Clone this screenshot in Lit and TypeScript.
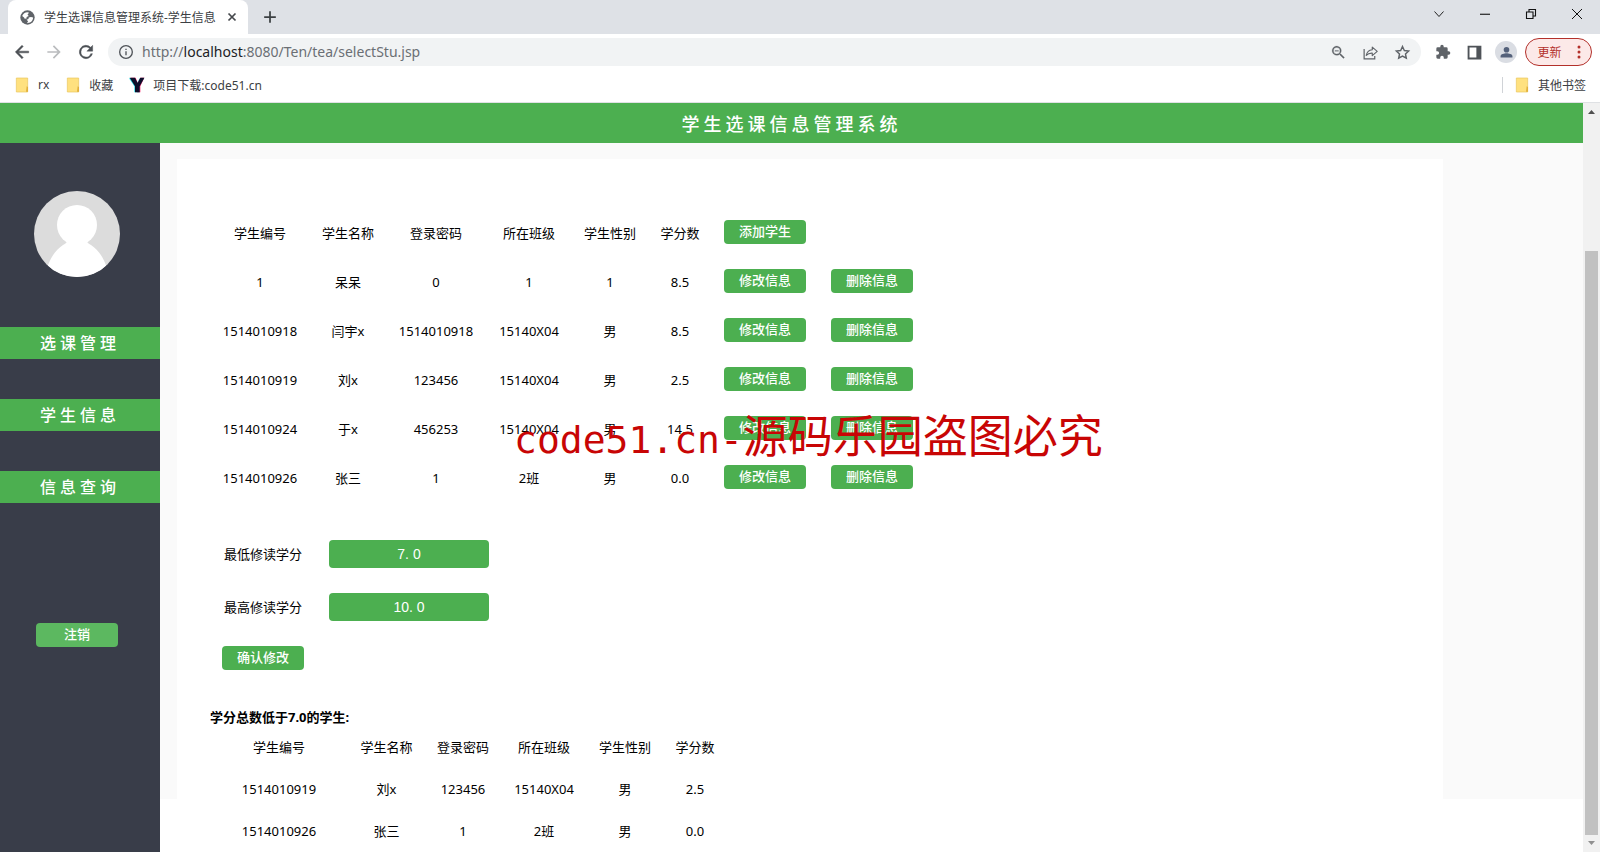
import { LitElement, html, css, svg } from "lit";
import { customElement } from "lit/decorators.js";

type Student = { id: string; name: string; password: string; className: string; gender: string; credit: string };

const HEADINGS = ["学生编号", "学生名称", "登录密码", "所在班级", "学生性别", "学分数"];

const STUDENTS: Student[] = [
  { id: "1", name: "呆呆", password: "0", className: "1", gender: "1", credit: "8.5" },
  { id: "1514010918", name: "闫宇x", password: "1514010918", className: "15140X04", gender: "男", credit: "8.5" },
  { id: "1514010919", name: "刘x", password: "123456", className: "15140X04", gender: "男", credit: "2.5" },
  { id: "1514010924", name: "于x", password: "456253", className: "15140X04", gender: "男", credit: "14.5" },
  { id: "1514010926", name: "张三", password: "1", className: "2班", gender: "男", credit: "0.0" },
];

const cells = (s: Student) =>
  [s.id, s.name, s.password, s.className, s.gender, s.credit].map((v) => html`<td>${v}</td>`);

const icon = (size: number, body: unknown) =>
  html`<svg width=${size} height=${size} viewBox="0 0 24 24" aria-hidden="true">${body}</svg>`;

const ICONS = {
  globe: svg`<circle cx="12" cy="12" r="11.500" fill="#5f6368"/><path d="M3.500 9.500C5 6 8 3.500 12 3.500l2.500 1-2.500 2.500 2 2.500-3.500 1.500v2.500l-3 .5-1-2zM14 12l3.500-1 3.500 1c0 3.500-2 6.500-5 8l-5 1 2-3-2.500-2.500 3-1z" fill="#fff"/>`,
  close: svg`<path d="M5 5l14 14M19 5L5 19" stroke="#45484c" stroke-width="3.4" fill="none"/>`,
  plus: svg`<path d="M12 2v20M2 12h20" stroke="#3c4043" stroke-width="3" fill="none"/>`,
  back: svg`<path d="M20 11H7.8l5.6-5.6L12 4l-8 8 8 8 1.4-1.4L7.8 13H20z" fill="#4c5055" stroke="#4c5055" stroke-width=".6"/>`,
  forward: svg`<path d="M4 11h12.2l-5.6-5.6L12 4l8 8-8 8-1.4-1.4 5.6-5.6H4z" fill="#babcbe"/>`,
  reload: svg`<path d="M17.65 6.35A8 8 0 1 0 19.73 14h-2.08A6 6 0 1 1 12 6c1.66 0 3.14.69 4.22 1.78L13 11h7V4z" fill="#4c5055" stroke="#4c5055" stroke-width=".5"/>`,
  info: svg`<circle cx="12" cy="12" r="9.5" fill="none" stroke="#4f5358" stroke-width="2"/><path d="M11 11h2v6h-2zM11 7h2v2h-2z" fill="#4f5358"/>`,
  zoomOut: svg`<path d="M15.5 14h-.8l-.3-.3A6.5 6.5 0 1 0 13.7 14.4l.3.3v.8l5 5 1.5-1.5zM9.5 14a4.5 4.5 0 1 1 0-9 4.5 4.5 0 0 1 0 9zM7 9h5v1.4H7z" fill="#5f6368" stroke="#5f6368" stroke-width=".3"/>`,
  share: svg`<path d="M3 7v14h15v-4" fill="none" stroke="#5f6368" stroke-width="1.7"/><path d="M14.5 4.5l7 6-7 6v-3.6c-3.500-.2-6.300.8-8.500 3.300.8-4.300 3.500-7.500 8.500-8z" fill="none" stroke="#5f6368" stroke-width="1.6" stroke-linejoin="round"/>`,
  star: svg`<path d="M12 3.600l2.600 5.600 6.100.7-4.500 4.200 1.200 6L12 17.100l-5.400 3 1.200-6-4.500-4.200 6.100-.7z" fill="none" stroke="#5f6368" stroke-width="2"/>`,
  puzzle: svg`<path d="M20.500 11H19V7a2 2 0 0 0-2-2h-4V3.500a2.500 2.500 0 0 0-5 0V5H4a2 2 0 0 0-2 2v3.800h1.500a2.700 2.700 0 0 1 0 5.400H2V20a2 2 0 0 0 2 2h3.800v-1.500a2.700 2.700 0 0 1 5.400 0V22H17a2 2 0 0 0 2-2v-4h1.500a2.500 2.500 0 0 0 0-5z" fill="#5f6368"/>`,
  panel: svg`<path d="M1 1h22v22H1zM4 4v16h11V4z" fill="#4f5358" fill-rule="evenodd"/>`,
  person: svg`<circle cx="12" cy="7.500" r="4.500" fill="#54617a"/><path d="M2.500 20v-2.500c0-3 6-4.500 9.500-4.500s9.500 1.500 9.500 4.500V20z" fill="#54617a"/>`,
  chevron: svg`<path d="M3 7l9 10 9-10" fill="none" stroke="#222" stroke-width="2"/>`,
  minimize: svg`<path d="M2 12.500h20" stroke="#111" stroke-width="2.200"/>`,
  restore: svg`<path d="M3 8h13v13H3zM8 8V3h13v13h-5" fill="none" stroke="#111" stroke-width="2.200"/>`,
  exit: svg`<path d="M2 2l20 20M22 2L2 22" stroke="#111" stroke-width="2" fill="none"/>`,
  folder: svg`<path d="M3.500 1.500h17v21h-17z" fill="#ffe17f" stroke="#e9c45c"/><path d="M18 22l1-8 2 1v7z" fill="#e2b13c"/>`,
  code: svg`<path d="M0 2h8l4 7 4-7h7l-7 12v9H8v-9z" fill="#27dfe8"/><path d="M3 1h7l3 8 4-8h6l-6 13v9h-5v-9z" fill="#f5286e"/><path d="M1 1h8l4 8 4-8h6l-7 13v9H9v-9z" fill="#0b0f2a"/>`,
};

@customElement("browser-chrome")
export class BrowserChrome extends LitElement {
  static styles = css`
    :host { display: block; flex: none; color: #3c4043; font-size: 12px; border-bottom: 1px solid #dfe1e4; }
    button { font: inherit; color: inherit; background: none; border: 0; padding: 0; display: flex; align-items: center; justify-content: center; }
    svg { display: block; flex: none; }
    .strip { display: flex; height: 34px; background: #dee1e6; }
    .tab { display: flex; align-items: center; width: 240px; margin-left: 8px; padding: 0 10px 0 12px; box-sizing: border-box; background: #fff; border-radius: 8px 8px 0 0; }
    .tab-title { flex: 1; margin-left: 9px; white-space: nowrap; }
    .new-tab { width: 44px; }
    .window { margin-left: auto; display: flex; }
    .window button { width: 46px; height: 28px; }
    .toolbar { display: flex; align-items: center; height: 36px; background: #fff; padding: 0 8px 0 12px; }
    .nav { width: 20px; margin-right: 12px; }
    .omnibox { flex: 1; display: flex; align-items: center; height: 28px; border-radius: 14px; background: #f1f3f4; padding: 0 10px; gap: 15px; }
    .address { flex: 1; margin-left: -7px; font-size: 14px; line-height: 20px; color: #6b6f74; }
    .host { color: #202124; }
    .tools { display: flex; align-items: center; gap: 16px; margin-left: 14px; }
    .avatar { width: 22px; height: 22px; border-radius: 50%; background: #dadde3; }
    .tools .avatar { margin: 0 -8px 0 -3px; }
    .update { height: 28px; width: 67px; border: 1px solid #b3302a; border-radius: 14px; background: #fce9e8; color: #b3302a; gap: 15px; padding-left: 1px; }
    .bookmarks { display: flex; align-items: center; height: 29px; background: #fff; padding: 0 14px 3px; gap: 16px; }
    .bookmarks a { display: flex; align-items: center; color: inherit; text-decoration: none; gap: 8px; }
    .bookmarks .other { margin-left: auto; padding-left: 11px; border-left: 1px solid #d0d3d7; height: 16px; }
  `;

  render() {
    return html`
      <div class="strip">
        <div class="tab">
          ${icon(15, ICONS.globe)}
          <span class="tab-title">学生选课信息管理系统-学生信息</span>
          <button aria-label="关闭标签页">${icon(12, ICONS.close)}</button>
        </div>
        <button class="new-tab" aria-label="新标签页">${icon(14, ICONS.plus)}</button>
        <div class="window">
          <button aria-label="搜索标签页">${icon(12, ICONS.chevron)}</button>
          <button aria-label="最小化">${icon(12, ICONS.minimize)}</button>
          <button aria-label="还原">${icon(12, ICONS.restore)}</button>
          <button aria-label="关闭">${icon(12, ICONS.exit)}</button>
        </div>
      </div>
      <div class="toolbar">
        <button class="nav" aria-label="后退">${icon(20, ICONS.back)}</button>
        <button class="nav" aria-label="前进">${icon(20, ICONS.forward)}</button>
        <button class="nav" aria-label="重新加载">${icon(20, ICONS.reload)}</button>
        <div class="omnibox">
          ${icon(16, ICONS.info)}
          <span class="address">http://<span class="host">localhost</span>:8080/Ten/tea/selectStu.jsp</span>
          <button aria-label="缩放">${icon(17, ICONS.zoomOut)}</button>
          <button aria-label="分享">${icon(17, ICONS.share)}</button>
          <button aria-label="收藏">${icon(17, ICONS.star)}</button>
        </div>
        <div class="tools">
          <button aria-label="扩展程序">${icon(16, ICONS.puzzle)}</button>
          <button aria-label="侧边栏">${icon(15, ICONS.panel)}</button>
          <button class="avatar" aria-label="用户">${icon(15, ICONS.person)}</button>
          <button class="update">更新
            <svg width="4" height="14" viewBox="0 0 4 14" fill="#b3302a"><circle cx="2" cy="2" r="1.500"/><circle cx="2" cy="7" r="1.500"/><circle cx="2" cy="12" r="1.500"/></svg>
          </button>
        </div>
      </div>
      <nav class="bookmarks">
        <a href="#">${icon(16, ICONS.folder)}rx</a>
        <a href="#">${icon(16, ICONS.folder)}收藏</a>
        <a href="#">${icon(16, ICONS.code)}项目下载:code51.cn</a>
        <a href="#" class="other">${icon(16, ICONS.folder)}其他书签</a>
      </nav>
    `;
  }
}

@customElement("side-menu")
export class SideMenu extends LitElement {
  static styles = css`
    :host { display: flex; flex-direction: column; align-items: center; flex: none; width: 160px; background: #393d49; color: #fff; }
    .portrait { display: block; margin: 48px 6px 50px 0; }
    nav { display: flex; flex-direction: column; gap: 40px; width: 100%; }
    a { line-height: 32px; text-align: center; background: #4caf50; color: #fff; font-size: 16px; font-weight: 500; letter-spacing: 4px; text-decoration: none; }
    button { width: 82px; height: 24px; margin: 120px 6px 0 0; padding: 0 0 2px; border: 0; border-radius: 4px; background: #5cb860; color: #fff; font-family: inherit; font-size: 13px; font-weight: 500; line-height: 20px; }
  `;

  render() {
    return html`
      <svg class="portrait" width="86" height="86" viewBox="0 0 86 86" aria-hidden="true">
        <defs><clipPath id="disc"><circle cx="43" cy="43" r="43" /></clipPath></defs>
        <g clip-path="url(#disc)">
          <path d="M0 0h86v86H0z" fill="#dcdcdc" />
          <circle cx="43" cy="34" r="20" fill="#fff" />
          <path d="M33 48c1 3-1 4-4 6-7 5-13 12-16 24v8h60v-8c-3-12-9-19-16-24-3-2-5-3-4-6z" fill="#fff" />
        </g>
      </svg>
      <nav>
        <a href="#">选课管理</a>
        <a href="#">学生信息</a>
        <a href="#">信息查询</a>
      </nav>
      <button>注销</button>
    `;
  }
}

@customElement("student-page")
export class StudentPage extends LitElement {
  static styles = css`
    :host { display: block; flex: 1; min-width: 0; height: calc(100% - 53px); background: #fafafa; color: #000; font-size: 13px; line-height: 18px; }
    .card { width: 89%; box-sizing: border-box; margin-left: 17px; padding: 49px 0 0 33px; background: #fff; }
    .top { height: 16px; }
    table { border-collapse: collapse; table-layout: fixed; }
    th, td { padding: 0; font-weight: 400; text-align: center; white-space: nowrap; }
    .students { width: 716px; }
    .students tr { height: 49px; }
    .students .action { padding: 0 0 2px 12px; text-align: left; }
    .action button, .confirm { display: block; width: 82px; height: 24px; padding: 0 0 2px; border: 0; border-radius: 4px; background: #4caf50; color: #fff; font-family: inherit; font-size: 13px; font-weight: 500; line-height: 20px; }
    .limits { display: grid; grid-template-columns: 82px 160px; column-gap: 25px; row-gap: 25px; align-items: center; padding: 38px 0 0 12px; }
    .limits label { text-align: center; }
    .limits input { width: 160px; height: 28px; box-sizing: border-box; padding: 0; border: 0; border-radius: 4px; background: #4caf50; color: #fff; text-align: center; font-family: "Liberation Sans", sans-serif; font-size: 14px; }
    .below { margin-top: 38px; width: 517px; }
    .below .caption { font-weight: 700; text-align: left; }
    .below .row { height: 42px; }
    .w138 { width: 138px; } .w107 { width: 107px; } .w100 { width: 100px; } .w86 { width: 86px; }
    .w77 { width: 77px; } .w76 { width: 76px; } .w64 { width: 64px; }
  `;

  render() {
    const low = STUDENTS.filter((s) => s.id.length > 1 && Number(s.credit) < 7);
    return html`
      <div class="top"></div>
      <section class="card">
        <table class="students">
          <colgroup>
            <col class="w100" /><col class="w76" /><col class="w100" /><col class="w86" />
            <col class="w76" /><col class="w64" /><col class="w107" /><col class="w107" />
          </colgroup>
          <thead>
            <tr>
              ${HEADINGS.map((h) => html`<th scope="col">${h}</th>`)}
              <td class="action"><button>添加学生</button></td>
              <td></td>
            </tr>
          </thead>
          <tbody>
            ${STUDENTS.map((s) => html`
              <tr>
                ${cells(s)}
                <td class="action"><button>修改信息</button></td>
                <td class="action"><button>删除信息</button></td>
              </tr>`)}
          </tbody>
        </table>
        <form class="limits" @submit=${(e: Event) => e.preventDefault()}>
          <label for="min">最低修读学分</label><input id="min" value="7. 0" />
          <label for="max">最高修读学分</label><input id="max" value="10. 0" />
          <button class="confirm">确认修改</button>
        </form>
        <table class="below">
          <colgroup>
            <col class="w138" /><col class="w77" /><col class="w76" /><col class="w86" /><col class="w76" /><col class="w64" />
          </colgroup>
          <thead>
            <tr><th class="caption" colspan="6">学分总数低于7.0的学生:</th></tr>
            <tr class="row">${HEADINGS.map((h) => html`<th scope="col">${h}</th>`)}</tr>
          </thead>
          <tbody>${low.map((s) => html`<tr class="row">${cells(s)}</tr>`)}</tbody>
        </table>
      </section>
    `;
  }
}

@customElement("app-root")
export class AppRoot extends LitElement {
  static styles = css`
    :host { display: flex; flex-direction: column; height: 100vh; overflow: hidden; position: relative; background: #fff; font-family: "Noto Sans", "Noto Sans CJK SC", sans-serif; }
    .view { flex: 1; min-height: 0; display: flex; }
    .page { flex: 1; min-width: 0; display: flex; flex-direction: column; overflow: hidden; }
    h1 { flex: none; margin: 0; line-height: 40px; padding-top: 1px; height: 39px; text-align: center; background: #4caf50; color: #fff; font-size: 18px; font-weight: 500; letter-spacing: 4px; }
    .body { flex: 1; min-height: 0; display: flex; }
    .scrollbar { flex: none; width: 17px; display: flex; flex-direction: column; background: #f1f1f1; }
    .arrow { display: block; flex: none; }
    .gap { flex: 131; }
    .thumb { flex: 584; margin: 0 2px; background: #c1c1c1; }
    .watermark { position: absolute; left: 514px; top: 402px; margin: 0; color: #c80505; font-family: "Noto Sans CJK SC", sans-serif; font-size: 45px; line-height: 64px; white-space: nowrap; pointer-events: none; }
    .latin { font-family: "DejaVu Sans Mono", monospace; font-size: 38px; line-height: 40px; }
  `;

  render() {
    return html`
      <browser-chrome></browser-chrome>
      <div class="view">
        <div class="page">
          <h1>学生选课信息管理系统</h1>
          <div class="body">
            <side-menu></side-menu>
            <student-page></student-page>
          </div>
        </div>
        <div class="scrollbar" aria-hidden="true">
          <svg class="arrow" width="17" height="17" viewBox="0 0 17 17"><path d="M5 11l3.500-4 3.500 4z" fill="#505050" /></svg>
          <div class="gap"></div>
          <div class="thumb"></div>
          <svg class="arrow" width="17" height="17" viewBox="0 0 17 17"><path d="M5 6l3.500 4L12 6z" fill="#909090" /></svg>
        </div>
      </div>
      <p class="watermark"><span class="latin">code51.cn-</span>源码乐园盗图必究</p>
    `;
  }
}
